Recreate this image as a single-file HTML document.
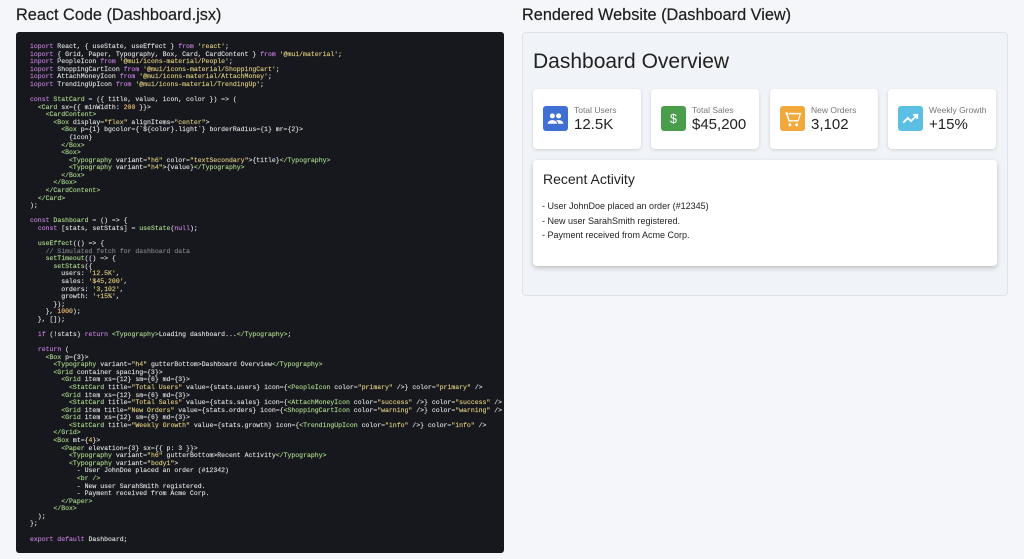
<!DOCTYPE html>
<html><head><meta charset="utf-8"><style>
*{margin:0;padding:0;box-sizing:border-box}
body{width:1024px;height:559px;background:#f4f6f9;font-family:"Liberation Sans",sans-serif;position:relative;overflow:hidden}
h2{position:absolute;font-size:16.3px;font-weight:normal;color:#1e1e1e;top:6px;-webkit-text-stroke:0.2px #1e1e1e}
.code{position:absolute;left:16px;top:32px;width:488px;height:521px;background:#16181d;border-radius:3px;padding:11px 0 0 14px;overflow:hidden}
pre{font-family:"Liberation Mono",monospace;font-size:6.5px;line-height:7.58px;color:#dcdcdc;white-space:pre;-webkit-text-stroke:0.15px currentColor}
.k{color:#c27bd8}.s{color:#d8c77c}.t{color:#a8d08a}.c{color:#7a7f88}.n{color:#e9b96e}
.panel{position:absolute;left:522px;top:32px;width:486px;height:264px;background:#f0f3f7;border:1px solid #dfe3e8;border-radius:4px}
.ttl{position:absolute;left:533px;top:50px;font-size:21px;color:#222}
.card{position:absolute;top:89px;width:108px;height:60px;background:#fff;border-radius:4px;box-shadow:0 1px 3px rgba(0,0,0,.15)}
.ic{position:absolute;left:10px;top:17px;width:25px;height:25px;border-radius:3px}
.ic svg{width:25px;height:25px}
.lb{position:absolute;left:41px;top:16px;font-size:8.5px;color:#777}
.vl{position:absolute;left:41px;top:27px;font-size:15px;color:#222}
.paper{position:absolute;left:533px;top:160px;width:464px;height:106px;background:#fff;border-radius:4px;box-shadow:0 2px 5px rgba(0,0,0,.22)}
.paper h3{position:absolute;left:10px;top:11px;font-size:14px;font-weight:normal;color:#222}
.paper p{position:absolute;left:9px;top:39px;font-size:9px;line-height:14.5px;color:#222}
</style></head><body>
<h2 style="left:16px">React Code (Dashboard.jsx)</h2>
<h2 style="left:522px">Rendered Website (Dashboard View)</h2>
<div class="code"><pre><span class="k">ioport</span> React, { useState, useEffect } <span class="k">from</span> <span class="s">'react'</span>;
<span class="k">ioport</span> { Grid, Paper, Typography, Box, Card, CardContent } <span class="k">from</span> <span class="s">'@mui/material'</span>;
<span class="k">inport</span> PeopleIcon <span class="k">from</span> <span class="s">'@mui/icons-material/People'</span>;
<span class="k">ioport</span> ShoppingCartIcon <span class="k">from</span> <span class="s">'@mui/icons-material/ShoppingCart'</span>;
<span class="k">ioport</span> AttachMoneyIcon <span class="k">from</span> <span class="s">'@mui/icons-material/AttachMoney'</span>;
<span class="k">ioport</span> TrendingUpIcon <span class="k">from</span> <span class="s">'@mui/icons-material/TrendingUp'</span>;

<span class="k">const</span> <span class="t">StatCard</span> = ({ title, value, icon, color }) =&gt; (
  <span class="t">&lt;Card</span> sx={{ minWidth: <span class="n">200</span> }}&gt;
    <span class="t">&lt;CardContent&gt;</span>
      <span class="t">&lt;Box</span> display=<span class="s">"flex"</span> alignItems=<span class="s">"center"</span>&gt;
        <span class="t">&lt;Box</span> p={1} bgcolor={`${color}.light`} borderRadius={1} mr={2}&gt;
          {icon}
        <span class="t">&lt;/Box&gt;</span>
        <span class="t">&lt;Box&gt;</span>
          <span class="t">&lt;Typography</span> variant=<span class="s">"h6"</span> color=<span class="s">"textSecondary"</span>&gt;{title}<span class="t">&lt;/Typography&gt;</span>
          <span class="t">&lt;Typography</span> variant=<span class="s">"h4"</span>&gt;{value}<span class="t">&lt;/Typography&gt;</span>
        <span class="t">&lt;/Box&gt;</span>
      <span class="t">&lt;/Box&gt;</span>
    <span class="t">&lt;/CardContent&gt;</span>
  <span class="t">&lt;/Card&gt;</span>
);

<span class="k">const</span> <span class="t">Dashboard</span> = () =&gt; {
  <span class="k">const</span> [stats, setStats] = <span class="t">useState</span>(<span class="k">null</span>);

  <span class="t">useEffect</span>(() =&gt; {
    <span class="c">// Simulated fetch for dashboard data</span>
    <span class="t">setTimeout</span>(() =&gt; {
      <span class="t">setStats</span>({
        users: <span class="s">'12.5K'</span>,
        sales: <span class="s">'$45,200'</span>,
        orders: <span class="s">'3,102'</span>,
        growth: <span class="s">'+15%'</span>,
      });
    }, <span class="n">1000</span>);
  }, []);

  <span class="k">if</span> (!stats) <span class="k">return</span> <span class="t">&lt;Typography&gt;</span>Loading dashboard...<span class="t">&lt;/Typography&gt;</span>;

  <span class="k">return</span> (
    <span class="t">&lt;Box</span> p={3}&gt;
      <span class="t">&lt;Typography</span> variant=<span class="s">"h4"</span> gutterBottom&gt;Dashboard Overview<span class="t">&lt;/Typography&gt;</span>
      <span class="t">&lt;Grid</span> container spacing={3}&gt;
        <span class="t">&lt;Grid</span> item xs={12} sm={6} md={3}&gt;
          <span class="t">&lt;StatCard</span> title=<span class="s">"Total Users"</span> value={stats.users} icon={<span class="t">&lt;PeopleIcon</span> color=<span class="s">"primary"</span> /&gt;} color=<span class="s">"primary"</span> /&gt;
        <span class="t">&lt;Grid</span> item xs={12} sm={6} md={3}&gt;
          <span class="t">&lt;StatCard</span> title=<span class="s">"Total Sales"</span> value={stats.sales} icon={<span class="t">&lt;AttachMoneyIcon</span> color=<span class="s">"success"</span> /&gt;} color=<span class="s">"success"</span> /&gt;
        <span class="t">&lt;Grid</span> item title=<span class="s">"New Orders"</span> value={stats.orders} icon={<span class="t">&lt;ShoppingCartIcon</span> color=<span class="s">"warning"</span> /&gt;} color=<span class="s">"warning"</span> /&gt;
        <span class="t">&lt;Grid</span> item xs={12} sm={6} md={3}&gt;
          <span class="t">&lt;StatCard</span> title=<span class="s">"Weekly Growth"</span> value={stats.growth} icon={<span class="t">&lt;TrendingUpIcon</span> color=<span class="s">"info"</span> /&gt;} color=<span class="s">"info"</span> /&gt;
      <span class="t">&lt;/Grid&gt;</span>
      <span class="t">&lt;Box</span> mt={<span class="n">4</span>}&gt;
        <span class="t">&lt;Paper</span> elevation={3} sx={{ p: 3 }}&gt;
          <span class="t">&lt;Typography</span> variant=<span class="s">"h6"</span> gutterBottom&gt;Recent Activity<span class="t">&lt;/Typography&gt;</span>
          <span class="t">&lt;Typography</span> variant=<span class="s">"body1"</span>&gt;
            - User JohnDoe placed an order (#12342)
            <span class="t">&lt;br /&gt;</span>
            - New user SarahSmith registered.
            - Payment received from Acme Corp.
        <span class="t">&lt;/Paper&gt;</span>
      <span class="t">&lt;/Box&gt;</span>
  );
};

<span class="k">export default</span> Dashboard;</pre></div>

<div class="panel"></div>
<div class="ttl">Dashboard Overview</div>

<div class="card" style="left:533px"><div class="ic" style="background:#3e6fd1"><svg viewBox="0 0 24 24"><g fill="#fff"><circle cx="9" cy="9.5" r="2.4"/><circle cx="15" cy="9.5" r="2.4"/><path d="M4.5 17c0-2.4 2.5-3.5 4.5-3.5s4.5 1.1 4.5 3.5z"/><path d="M12.5 13.6c.8-.1 1.8-.1 2.5-.1 2 0 4.5 1.1 4.5 3.5h-5c0-1.4-.8-2.6-2-3.4z"/></g></svg></div><div class="lb">Total Users</div><div class="vl">12.5K</div></div>
<div class="card" style="left:651px"><div class="ic" style="background:#4a9d4a"><svg viewBox="0 0 24 24"><text x="12" y="16.5" text-anchor="middle" font-family="Liberation Sans" font-size="12" fill="#fff">$</text></svg></div><div class="lb">Total Sales</div><div class="vl">$45,200</div></div>
<div class="card" style="left:770px"><div class="ic" style="background:#f2a93b"><svg viewBox="0 0 24 24"><g fill="#fff"><path d="M5 6h2.2l2 7.5h7.8l1.8-5.5H8.6l-.4-1.4h12.2l-2.6 8.3H8.3z"/><circle cx="9.5" cy="18" r="1.4"/><circle cx="16" cy="18" r="1.4"/></g></svg></div><div class="lb">New Orders</div><div class="vl">3,102</div></div>
<div class="card" style="left:888px"><div class="ic" style="background:#5bbfe4"><svg viewBox="0 0 24 24"><path d="M5 16l4.5-4.5 3 3L18 9M14.5 8.5H18.5v4" stroke="#fff" stroke-width="1.8" fill="none"/></svg></div><div class="lb">Weekly Growth</div><div class="vl">+15%</div></div>

<div class="paper"><h3>Recent Activity</h3><p>- User JohnDoe placed an order (#12345)<br>- New user SarahSmith registered.<br>- Payment received from Acme Corp.</p></div>
</body></html>
